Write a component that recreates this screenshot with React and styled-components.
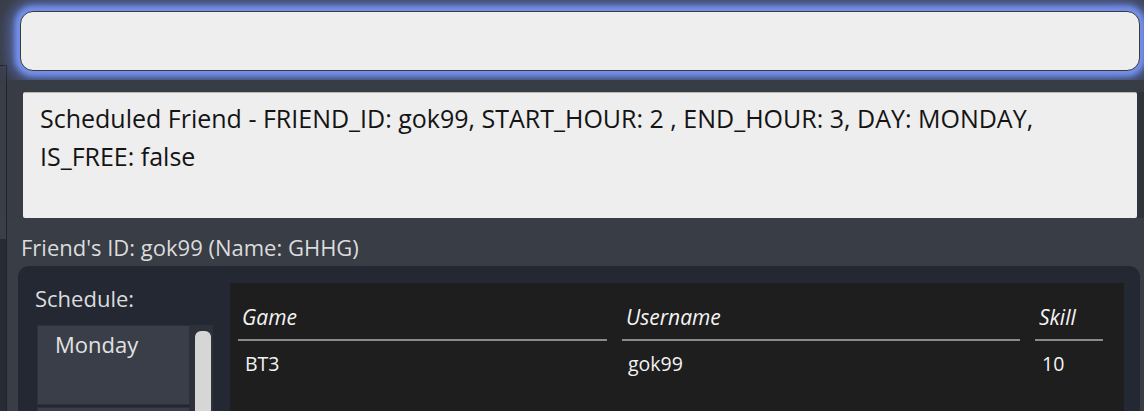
import React from "react";
import styled, { createGlobalStyle } from "styled-components";

const GlobalStyle = createGlobalStyle`
  * { box-sizing: border-box; }
  html, body {
    margin: 0;
    padding: 0;
    background: #393d46;
    font-family: "Open Sans", "Liberation Sans", sans-serif;
    overflow: hidden;
  }
`;

const Window = styled.div`
  display: flex;
  width: 1144px;
  height: 411px;
  background: #393d46;
  overflow: hidden;
`;

const SidePane = styled.div`
  width: 7px;
  flex-shrink: 0;
  margin-top: 65px;
  border-top: 1px solid #1f232a;
  border-right: 1px solid #1f232a;
  background: linear-gradient(to bottom, #393e48 0, #393e48 173px, #262b34 173px);
`;

const Main = styled.div`
  flex: 1;
  display: flex;
  flex-direction: column;
  min-width: 0;
`;

const CommandBar = styled.div`
  height: 80px;
  padding: 11px 4px 9px 20px;
  margin-left: -7px;
  position: relative;
  z-index: 2;
`;

const CommandInput = styled.div`
  height: 60px;
  background: #eeeeee;
  border: 1px solid #3a3a3a;
  border-radius: 13px;
  box-shadow: 0 0 5px 5px #7490ea, 0 0 16px 9px rgba(98, 122, 214, 0.85);
`;

const ResultArea = styled.div`
  position: relative;
  z-index: 3;
  display: flex;
  background: #383c45;
  padding-top: 12px;
  padding-left: 16px;
`;

const ResultBox = styled.div`
  flex: 1;
  height: 126px;
  background: #eeeeee;
  border-top: 1px solid #b8b8b8;
  border-radius: 2px;
  padding: 6px 40px 0 17px;
  color: #141414;
  font-size: 25px;
  line-height: 38px;
`;

const ResultTrack = styled.div`
  width: 7px;
  background: #2f333b;
`;

const Body = styled.div`
  flex: 1;
  display: flex;
  flex-direction: column;
  padding: 14px 4px 0 11px;
`;

const FriendLabel = styled.div`
  color: #dcdcdc;
  font-size: 22px;
  line-height: 30px;
  padding-left: 3px;
  margin-bottom: 4px;
`;

const Card = styled.div`
  flex: 1;
  display: flex;
  gap: 17px;
  background: #232833;
  border-radius: 11px 11px 0 0;
  padding: 17px 16px 0 17px;
`;

const ScheduleColumn = styled.div`
  display: flex;
  flex-direction: column;
  width: 178px;
`;

const ScheduleLabel = styled.div`
  color: #dcdcdc;
  font-size: 22px;
  line-height: 30px;
  margin-bottom: 12px;
`;

const ListFrame = styled.div`
  display: flex;
  margin-left: 2px;
  flex: 1;
`;

const DayList = styled.div`
  width: 153px;
  display: flex;
  flex-direction: column;
  gap: 2px;
`;

const DayItem = styled.div`
  height: 80px;
  flex-shrink: 0;
  background: #3a3e48;
  border: 1px solid #2b303a;
  color: #e2e2e2;
  font-size: 22px;
  line-height: 30px;
  padding: 3px 0 0 17px;
`;

const ScrollTrack = styled.div`
  width: 23px;
  background: #2c313a;
  padding: 6px 2px 0 5px;
`;

const ScrollThumb = styled.div`
  height: 120px;
  background: #d6d6d6;
  border-radius: 6px;
`;

const Table = styled.div`
  flex: 1;
  background: #1e1e1e;
  padding: 0 0 0 8px;
`;

const Row = styled.div`
  display: grid;
  grid-template-columns: 369px 398px 68px;
  column-gap: 15px;
`;

const HeadCell = styled.div`
  color: #f4f4f4;
  font-style: italic;
  font-size: 21px;
  line-height: 28px;
  padding: 20px 0 8px 4px;
  border-bottom: 2px solid #8a8a8a;
`;

const Cell = styled.div`
  color: #f2f2f2;
  font-size: 19.5px;
  line-height: 28px;
  padding: 9px 0 0 ${(p) => p.$indent || 7}px;
`;

const days = ["Monday", ""];
const columns = ["Game", "Username", "Skill"];
const rows = [{ game: "BT3", username: "gok99", skill: "10" }];

export default function App() {
  return (
    <>
      <GlobalStyle />
      <Window>
        <SidePane />
        <Main>
          <CommandBar>
            <CommandInput />
          </CommandBar>
          <ResultArea>
            <ResultBox>
              Scheduled Friend - FRIEND_ID: gok99, START_HOUR: 2 , END_HOUR: 3, DAY: MONDAY, IS_FREE: false
            </ResultBox>
            <ResultTrack />
          </ResultArea>
          <Body>
            <FriendLabel>Friend's ID: gok99 (Name: GHHG)</FriendLabel>
            <Card>
              <ScheduleColumn>
                <ScheduleLabel>Schedule:</ScheduleLabel>
                <ListFrame>
                  <DayList>
                    {days.map((d, i) => (
                      <DayItem key={i}>{d}</DayItem>
                    ))}
                  </DayList>
                  <ScrollTrack>
                    <ScrollThumb />
                  </ScrollTrack>
                </ListFrame>
              </ScheduleColumn>
              <Table>
                <Row>
                  {columns.map((c) => (
                    <HeadCell key={c}>{c}</HeadCell>
                  ))}
                </Row>
                {rows.map((r) => (
                  <Row key={r.username}>
                    <Cell>{r.game}</Cell>
                    <Cell $indent={6}>{r.username}</Cell>
                    <Cell>{r.skill}</Cell>
                  </Row>
                ))}
              </Table>
            </Card>
          </Body>
        </Main>
      </Window>
    </>
  );
}
